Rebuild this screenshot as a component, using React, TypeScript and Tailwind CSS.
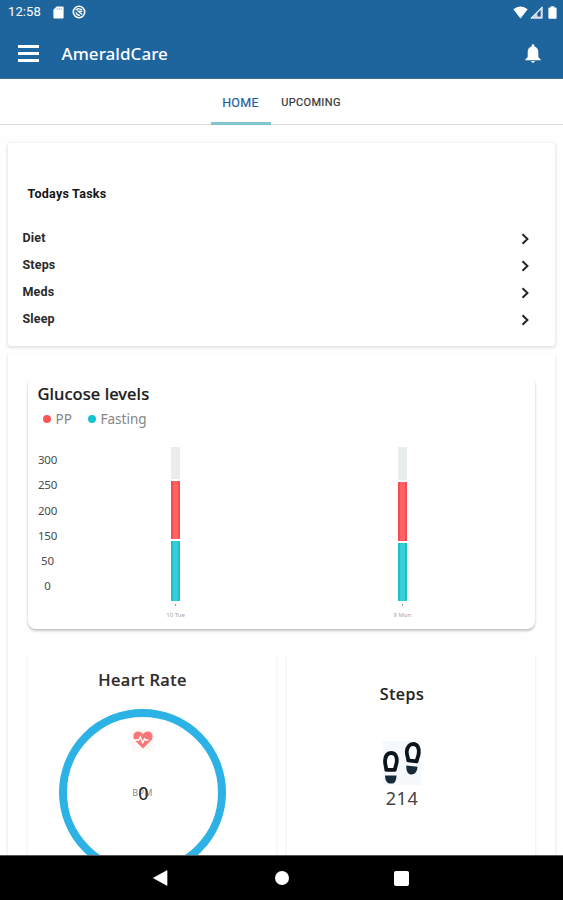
import React from "react";

const muli = "font-['Noto_Sans',sans-serif]";

function StatusBar() {
  return (
    <div className="flex h-6 items-center pl-2 pr-[6px] text-white">
      <span className="w-[45px] text-[13px] leading-6 tracking-[0.1px]">12:58</span>
      <svg className="block" width="11" height="13" viewBox="0 0 11 13">
        <path d="M3.6 .5H9.6Q10.6 .5 10.6 1.5V11.5Q10.6 12.5 9.6 12.5H1.4Q.4 12.5 .4 11.5V3.7Z" fill="currentColor" />
        <path d="M4.2 2v2M6.2 2v2M8.2 2v2" stroke="#8fb4d2" strokeWidth=".8" />
      </svg>
      <svg className="ml-2 block" width="14" height="14" viewBox="0 0 14 14" fill="none" stroke="currentColor">
        <circle cx="7" cy="7" r="5.7" strokeWidth="1.6" />
        <path d="M3.6 4.8L6 3.6L10 4.6M4 7.4Q4.6 10.4 8 10.4M5.4 5.6L10.2 9.4M7.4 6.2L10.4 6.4" strokeWidth="1.3" />
      </svg>
      <div className="ml-auto flex items-center gap-[2px]">
        <svg width="15" height="13" viewBox="0 0 15 13">
          <path d="M.3 3.2Q7.5-2.2 14.7 3.2L7.5 12.4Z" fill="currentColor" />
        </svg>
        <svg width="13" height="13" viewBox="0 0 13 13">
          <path d="M12.2 .8V12.2H.8Z" fill="currentColor" fillOpacity=".75" />
          <path d="M10.6 4V10.6H7.5V7.2Z" fill="#1e5590" />
          <path d="M12.2 .8V12.2H.8Z" fill="none" stroke="currentColor" strokeWidth=".8" />
        </svg>
        <svg className="ml-[3px]" width="9" height="13" viewBox="0 0 9 13">
          <path d="M2.7 .3H6.3V1.6H7.8Q8.6 1.6 8.6 2.4V12Q8.6 12.8 7.8 12.8H1.2Q.4 12.8 .4 12V2.4Q.4 1.6 1.2 1.6H2.7Z" fill="currentColor" />
        </svg>
      </div>
    </div>
  );
}

function Header() {
  return (
    <header className="h-[79px] shrink-0 border-b border-[#3f7199] bg-[#1e659e]">
      <StatusBar />
      <div className="flex h-[54px] items-center pl-[18px] pr-[22px] pt-1 text-white">
        <div className="flex w-[43.5px] flex-col gap-1">
          <i className="h-[3px] w-[21px] bg-white" />
          <i className="h-[3px] w-[21px] bg-white" />
          <i className="h-[3px] w-[21px] bg-white" />
        </div>
        <h1 className={`${muli} pt-[2px] text-[17px] font-medium leading-6 tracking-[0.05px]`}>AmeraldCare</h1>
        <svg className="ml-auto" width="16" height="19" viewBox="0 0 16 19" fill="currentColor">
          <path d="M8 .3Q9.4 .3 9.4 1.7V2.4Q13.3 3.5 13.3 8V13L15.7 15.4V16.2H.3V15.4L2.7 13V8Q2.7 3.5 6.6 2.4V1.7Q6.6 .3 8 .3ZM6 17H10Q9.7 18.8 8 18.8Q6.3 18.8 6 17Z" />
        </svg>
      </div>
    </header>
  );
}

function Tabs() {
  return (
    <nav className="flex h-[46px] shrink-0 justify-center border-b border-[#dcdcdc] pr-[2px]">
      <div className="-mb-px flex w-[60px] items-center justify-center border-b-[3px] border-[#83c5cc] pt-[5px] text-[12.5px] tracking-[0.3px] text-[#1e62a0] [-webkit-text-stroke:0.2px]">HOME</div>
      <div className="flex w-20 items-center justify-center pl-[1px] pt-[3px] text-[11px] tracking-[0.35px] text-[#333] [-webkit-text-stroke:0.2px]">UPCOMING</div>
    </nav>
  );
}

function Tasks() {
  return (
    <section className="h-[203px] shrink-0 rounded-[3px] bg-white pl-[14.5px] pr-[25px] pt-[41px] shadow-[0_1px_3px_1px_rgba(0,0,0,0.11)]">
      <h2 className="pl-[5px] text-[12.5px] font-bold leading-5 tracking-[0.25px] text-[#151515]">Todays Tasks</h2>
      <ul className="mt-[21px]">
        {["Diet", "Steps", "Meds", "Sleep"].map((task) => (
          <li key={task} className="flex h-[27.2px] items-center justify-between text-[12.5px] font-bold tracking-[0.15px] text-[#2a2a2a]">
            <span className="-mt-[1px]">{task}</span>
            <svg width="9" height="12" viewBox="0 0 9 12" fill="none" stroke="#222" strokeWidth="1.9">
              <path d="M1.5 1.2L6.5 6L1.5 10.8" />
            </svg>
          </li>
        ))}
      </ul>
    </section>
  );
}

const days = [
  { label: "10 Tue", rest: "h-[32px]", pp: "h-[58px]", fasting: "h-[60px]" },
  { label: "9 Mon", rest: "h-[33px]", pp: "h-[59px]", fasting: "h-[58px]" },
];

function Glucose() {
  return (
    <section className={`${muli} h-[252px] shrink-0 rounded-lg bg-white pl-[9.5px] pt-[5px] shadow-[0_2px_3px_0_rgba(0,0,0,0.22),0_1px_2px_0_rgba(0,0,0,0.06)]`}>
      <h2 className="text-[16.5px] font-medium leading-6 tracking-[0.05px] text-[#1c1c1c] [-webkit-text-stroke:0.2px]">Glucose levels</h2>
      <div className="flex h-[26px] items-center pl-[5px] text-[13.5px] text-[#858585]">
        <i className="mr-[5px] size-2 rounded-full bg-[#fb5458]" />
        <span className="w-[32px]">PP</span>
        <i className="mr-[5px] size-2 rounded-full bg-[#17c3ce]" />
        <span>Fasting</span>
      </div>
      <div className="mt-[15px] flex">
        <div className="flex w-5 flex-col items-center text-[11.5px] tracking-[-0.2px] text-[#4a4a4a]">
          {[300, 250, 200, 150, 50, 0].map((n) => (
            <span key={n} className="h-[25.3px] leading-[25px]">{n}</span>
          ))}
        </div>
        <div className="flex gap-[187px] pl-[98px]">
          {days.map((d) => (
            <div key={d.label} className="flex w-10 flex-col items-center">
              <div className="flex flex-col gap-[2px]">
                <div className={`w-[9.5px] bg-[#e9edec] ${d.rest}`} />
                <div className={`w-[9.5px] border-x-2 border-[#f84d50] bg-[#ff6264] ${d.pp}`} />
                <div className={`w-[9.5px] border-x-2 border-[#15c2cd] bg-[#36ced7] ${d.fasting}`} />
              </div>
              <i className="mt-[3px] size-[1.5px] bg-[#999]" />
              <span className="mt-[4px] whitespace-nowrap text-[6px] leading-[10px] text-[#a5a5a5]">{d.label}</span>
            </div>
          ))}
        </div>
      </div>
    </section>
  );
}

function HeartRate() {
  return (
    <section className="flex w-[248px] flex-col items-center rounded-lg bg-white pr-[19px] pt-[18px] shadow-[0_3px_3px_0_rgba(0,0,0,0.13)]">
      <h2 className="text-[16.5px] font-medium leading-6 tracking-[0.4px] text-[#2a2a2a] [-webkit-text-stroke:0.2px]">Heart Rate</h2>
      <div className="mt-[17px] flex size-[167px] shrink-0 flex-col items-center rounded-full border-8 border-[#2cb2e5] pt-[12px]">
        <div className="flex size-[22px] items-center justify-center bg-[#fdf7f6]">
          <svg width="20" height="18" viewBox="0 0 20 18">
            <path d="M10 17.5L2 9.6C-1 6 .5 .6 5 .6C7.5 .6 9 2 10 3.2C11 2 12.5 .6 15 .6C19.5 .6 21 6 18 9.6Z" fill="#fa7779" />
            <path d="M1 9H5.8L7.3 6.2L9.8 11.5L11.5 8L12.5 9H15.5" fill="none" stroke="#fff" strokeWidth="1.5" />
          </svg>
        </div>
        <div className="mt-[30px] grid place-items-center">
          <span className="col-start-1 row-start-1 text-[9px] tracking-[0.4px] text-[#8a8a8a]">BPM</span>
          <span className="col-start-1 row-start-1 pl-[2px] text-[18px] leading-6 text-[#222]">0</span>
        </div>
      </div>
    </section>
  );
}

function Steps() {
  return (
    <section className="flex w-[248px] flex-col items-center rounded-lg bg-white pr-[18px] pt-8 shadow-[0_3px_3px_0_rgba(0,0,0,0.13)]">
      <h2 className="text-[16px] font-medium leading-6 tracking-[0.5px] text-[#222] [-webkit-text-stroke:0.2px]">Steps</h2>
      <svg className="mt-[35px] bg-[#f6f9fb]" width="38" height="44" viewBox="0 0 38 44" overflow="visible">
        <g fill="#fcfeff" stroke="#0b151b" strokeWidth="3.8" strokeLinejoin="round">
          <path d="M3.2 28.8C3.4 25 1.4 23.5 2.2 18.5C2.9 13.5 5 12 8.2 12C12.2 12 14 15.5 13.8 20C13.6 24 12 25.5 11.9 28.8Z" />
          <path d="M25.2 19.4C25.2 16 23.5 14.5 23.8 10.4C24.2 5.8 26.7 3 30.2 3C34.5 3 36 7 35.8 11.5C35.5 16 34 17 33.7 20.4Z" />
        </g>
        <g fill="#162b37">
          <path d="M2 34.4H13.5C13.3 39.5 12 42.6 8 42.6C4 42.6 2.2 39.6 2 34.4Z" />
          <path d="M23.3 24.6L34.5 25.8C34 31.5 31.5 33.8 28 33.5C24.8 33.3 23.1 30.4 23.3 24.6Z" />
        </g>
      </svg>
      <span className="mt-[1px] text-[18px] leading-6 tracking-[0.5px] text-[#444]">214</span>
    </section>
  );
}

function NavBar() {
  return (
    <footer className="flex h-[45px] shrink-0 items-center border-t border-[#555] bg-black pl-[153px]">
      <svg width="15" height="16" viewBox="0 0 15 16">
        <path d="M.5 8L14 .6V15.4Z" fill="#fff" stroke="#fff" strokeWidth=".7" strokeLinejoin="round" />
      </svg>
      <i className="ml-[107px] size-[14px] rounded-full bg-white" />
      <i className="ml-[105px] size-[15px] rounded-[2px] bg-white" />
    </footer>
  );
}

export default function App() {
  return (
    <div className="flex h-[900px] w-[563px] flex-col overflow-hidden bg-white font-['Roboto',sans-serif]">
      <Header />
      <Tabs />
      <main className="flex min-h-0 flex-1 flex-col overflow-hidden bg-[#fefefe] pl-2 pr-2 pt-[18px]">
        <Tasks />
        <div className="mt-[7px] flex h-[560px] shrink-0 flex-col rounded-[3px] bg-white px-5 pt-[24px] shadow-[0_2px_3px_1px_rgba(0,0,0,0.08)]">
          <Glucose />
          <div className={`${muli} mt-[21px] flex h-[280px] justify-between`}>
            <HeartRate />
            <Steps />
          </div>
        </div>
      </main>
      <NavBar />
    </div>
  );
}
